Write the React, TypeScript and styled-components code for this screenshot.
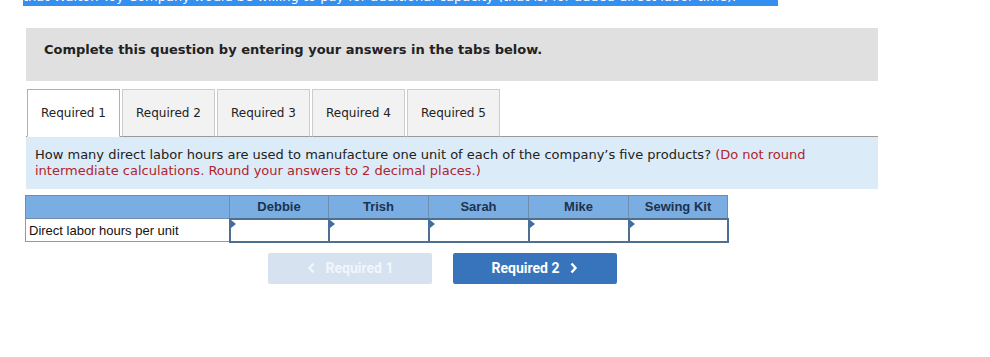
import React from 'react'
import styled, { createGlobalStyle } from 'styled-components'

// ----- Styles -----

const GlobalStyle = createGlobalStyle`
  body {
    margin: 0;
    background: #fff;
    font-family: "DejaVu Sans", Verdana, sans-serif;
  }
`

const Page = styled.div`
  padding-left: 26px;
  width: 852px;
`

const Selection = styled.div`
  margin-left: -3px;
  width: 755px;
  height: 6px;
  overflow: hidden;
  background: #3390f0;
`

const SelectionText = styled.div`
  margin-top: -11px;
  font-size: 13px;
  line-height: 16px;
  color: #fff;
  white-space: nowrap;
`

const Banner = styled.div`
  box-sizing: border-box;
  margin-top: 22px;
  padding: 14px 0 0 18px;
  height: 53px;
  background: #e0e0e0;
  font-size: 13px;
  line-height: 16px;
  font-weight: bold;
  color: #222;
`

const TabRow = styled.div`
  display: flex;
  gap: 2px;
  margin-top: 8px;
  padding-left: 1px;
  border-bottom: 1px solid #9a9a9a;
`

const Tab = styled.div<{ $active?: boolean }>`
  display: flex;
  align-items: center;
  justify-content: center;
  box-sizing: border-box;
  width: 93px;
  height: 48px;
  margin-bottom: -1px;
  border: 1px solid ${p => (p.$active ? '#b0b0b0' : '#cccccc')};
  border-bottom: ${p => (p.$active ? '1px solid #fff' : '1px solid #9a9a9a')};
  background: ${p => (p.$active ? '#fff' : '#f2f2f2')};
  font-size: 12px;
  color: #222;
`

const Instructions = styled.div`
  padding: 10px 9px 10px;
  background: #dcebf8;
  font-size: 13px;
  line-height: 16px;
  color: #222;
`

const Note = styled.span`
  color: #b2232f;
`

const Table = styled.table`
  margin-top: 6px;
  margin-left: -1px;
  border-collapse: collapse;
  font-family: "Liberation Sans", Arial, sans-serif;
`

const HeadCell = styled.th<{ $w: number }>`
  box-sizing: border-box;
  width: ${p => p.$w}px;
  height: 23px;
  padding: 0;
  border: 1px solid #6f8eae;
  background: #7aaee2;
  font-size: 13px;
  font-weight: bold;
  color: #1c3350;
  text-align: center;
`

const Label = styled.td`
  height: 22px;
  padding: 0 0 0 3px;
  border: 1px solid #8e9aa6;
  font-size: 13px;
  color: #111;
  white-space: nowrap;
`

const InputCell = styled.td`
  position: relative;
  padding: 0;
  border: 2px solid #4f6f90;
  background: #fff;

  &::before {
    content: '';
    position: absolute;
    top: 0;
    left: 0;
    border-top: 4px solid transparent;
    border-bottom: 4px solid transparent;
    border-left: 5px solid #3c6fa8;
  }
`

const Nav = styled.div`
  display: flex;
  gap: 21px;
  margin-top: 10px;
  padding-left: 242px;
`

const NavButton = styled.button<{ $disabled?: boolean }>`
  display: flex;
  align-items: center;
  justify-content: center;
  gap: 10px;
  width: 164px;
  height: 31px;
  border: none;
  border-radius: 2px;
  background: ${p => (p.$disabled ? '#d6e2f0' : '#3874bb')};
  color: ${p => (p.$disabled ? '#f2f6fb' : '#fff')};
  font-family: Roboto, "Liberation Sans", sans-serif;
  font-size: 14px;
  font-weight: bold;
  padding: 0;
`

const Chevron = ({ dir }: { dir: 'left' | 'right' }) => (
  <svg width="9" height="12" viewBox="0 0 9 12">
    <path
      d={dir === 'left' ? 'M6.5 1.5 L2.5 6 L6.5 10.5' : 'M2.5 1.5 L6.5 6 L2.5 10.5'}
      fill="none"
      stroke="currentColor"
      strokeWidth="2.4"
    />
  </svg>
)

// ----- Component Logic ------

const products = ['Debbie', 'Trish', 'Sarah', 'Mike', 'Sewing Kit']
const widths = [99, 100, 100, 100, 99]

const App: React.FC = () => (
  <>
    <GlobalStyle />
    <Page>
      <Selection>
        <SelectionText>
          that Walton Toy Company would be willing to pay for additional capacity (that is, for added direct labor time).
        </SelectionText>
      </Selection>
      <Banner>Complete this question by entering your answers in the tabs below.</Banner>
      <TabRow>
        {[1, 2, 3, 4, 5].map(n => (
          <Tab key={n} $active={n === 1}>
            Required {n}
          </Tab>
        ))}
      </TabRow>
      <Instructions>
        How many direct labor hours are used to manufacture one unit of each of the company’s five products?{' '}
        <Note>
          (Do not round
          <br />
          intermediate calculations. Round your answers to 2 decimal places.)
        </Note>
      </Instructions>
      <Table>
        <thead>
          <tr>
            <HeadCell $w={204} />
            {products.map((p, i) => (
              <HeadCell key={p} $w={widths[i]}>
                {p}
              </HeadCell>
            ))}
          </tr>
        </thead>
        <tbody>
          <tr>
            <Label>Direct labor hours per unit</Label>
            {products.map(p => (
              <InputCell key={p} />
            ))}
          </tr>
        </tbody>
      </Table>
      <Nav>
        <NavButton $disabled>
          <Chevron dir="left" />
          Required 1
        </NavButton>
        <NavButton>
          Required 2
          <Chevron dir="right" />
        </NavButton>
      </Nav>
    </Page>
  </>
)

export default App
